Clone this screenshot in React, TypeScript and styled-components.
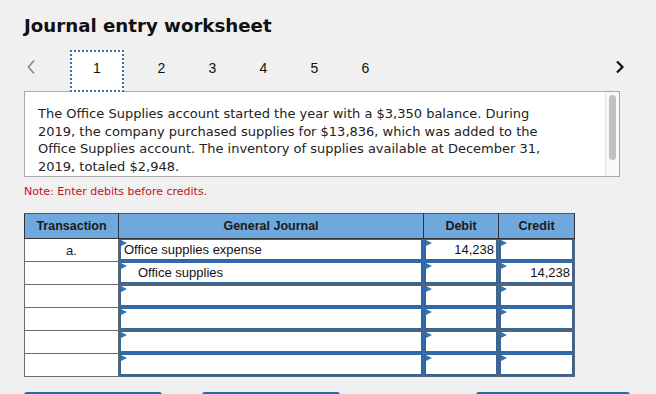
import styled, { createGlobalStyle } from 'styled-components';

const GlobalStyle = createGlobalStyle`
    html, body {
        margin: 0;
        padding: 0;
        overflow: hidden;
        background: #f0f0f0;
    }
`

const Page = styled.div`
    padding: 15px 26px 0 24px;
    font-family: 'DejaVu Sans', Verdana, sans-serif;
    color: #222;
`

const Title = styled.h1`
    margin: 0;
    font-size: 18.2px;
    font-weight: bold;
    line-height: 21px;
    color: #111;
`

const Nav = styled.div`
    display: flex;
    align-items: flex-start;
    height: 41px;
    margin-top: 14px;
    font-family: 'Liberation Sans', Arial, sans-serif;
`

const Arrow = styled.div<{ $dark?: boolean }>`
    display: flex;
    align-items: center;
    height: 34px;
    width: 46px;
    svg {
        display: block;
    }
    ${p => p.$dark && 'width: auto; margin-left: auto; padding-right: 4px;'}
`

const Tab = styled.div<{ $active?: boolean }>`
    box-sizing: border-box;
    width: ${p => (p.$active ? '54px' : '51px')};
    height: 42px;
    padding-top: 10px;
    text-align: center;
    font-size: 14px;
    line-height: 16px;
    color: #111;
    ${p => p.$active && `
        background: #fff;
        border: 2px dotted #3a6fb0;
        margin-right: 12px;
        padding-top: 8px;
    `}
`

const Question = styled.div`
    display: flex;
    box-sizing: border-box;
    width: 596px;
    height: 86px;
    background: #fff;
    border: 1px solid #a9a9a9;
    overflow: hidden;
`

const QuestionText = styled.p`
    flex: 1;
    margin: 0;
    padding: 13px 44px 0 13px;
    font-size: 13px;
    line-height: 17.7px;
    color: #222;
`

const ScrollTrack = styled.div`
    width: 14px;
    flex: none;
    background: #f8f8f8;
    border-left: 1px solid #e4e4e4;
    padding: 3px 3px 0 3px;
    box-sizing: border-box;
`

const ScrollThumb = styled.div`
    height: 65px;
    border-radius: 4px;
    background: #c1c1c1;
`

const Note = styled.div`
    margin-top: 8px;
    font-size: 11px;
    line-height: 13px;
    color: #c0101e;
`

const Journal = styled.table`
    margin-top: 15px;
    width: 550px;
    border-collapse: collapse;
    table-layout: fixed;
    font-family: 'Liberation Sans', Arial, sans-serif;
    font-size: 13px;
    background: #fff;
`

const Head = styled.th<{ $w: number }>`
    width: ${p => p.$w}px;
    height: 24px;
    padding: 0;
    background: #6fa8dc;
    border: 1px solid #333;
    border-top-color: #555;
    font-size: 12.5px;
    font-weight: bold;
    color: #1a1a1a;
    text-align: center;
`

const Plain = styled.td`
    height: 22px;
    padding: 0;
    border: 1px solid #6a6a6a;
    text-align: center;
    color: #222;
`

const InputCell = styled.td`
    height: 22px;
    padding: 0;
    border: 1px solid #5c6670;
`

const Field = styled.div<{ $right?: boolean; $indent?: boolean }>`
    position: relative;
    box-sizing: border-box;
    height: 22px;
    border: 2px solid #2f67a6;
    border-top-width: 1px;
    padding: 0 ${p => (p.$right ? '2px' : '3px')} 0 ${p => (p.$indent ? '17px' : '3px')};
    line-height: 20px;
    text-align: ${p => (p.$right ? 'right' : 'left')};
    color: #111;
    white-space: nowrap;
    overflow: hidden;
`

const Marker = styled.span`
    position: absolute;
    left: 0;
    top: 0;
    width: 0;
    height: 0;
    border-top: 3.5px solid transparent;
    border-bottom: 3.5px solid transparent;
    border-left: 6px solid #3572ba;
`

const Buttons = styled.div`
    display: flex;
    margin-top: 15px;
`

const Button = styled.div<{ $w: number; $gap: number }>`
    width: ${p => p.$w}px;
    margin-left: ${p => p.$gap}px;
    height: 30px;
    background: #2f6aa8;
    border-radius: 3px 3px 0 0;
`

const rows = [
    { tx: 'a.', account: 'Office supplies expense', debit: '14,238', credit: '' },
    { tx: '', account: 'Office supplies', debit: '', credit: '14,238', indent: true },
    { tx: '', account: '', debit: '', credit: '' },
    { tx: '', account: '', debit: '', credit: '' },
    { tx: '', account: '', debit: '', credit: '' },
    { tx: '', account: '', debit: '', credit: '' },
]

function App() {
    return (
        <Page>
            <GlobalStyle />
            <Title>Journal entry worksheet</Title>
            <Nav>
                <Arrow>
                    <svg width="14" height="16" viewBox="0 0 14 16">
                        <path d="M10 1.5 L4.5 8 L10 14.5" fill="none" stroke="#8a8a8a" strokeWidth="1.6" />
                    </svg>
                </Arrow>
                <Tab $active>1</Tab>
                {[2, 3, 4, 5, 6].map(n => (
                    <Tab key={n}>{n}</Tab>
                ))}
                <Arrow $dark>
                    <svg width="12" height="16" viewBox="0 0 12 16">
                        <path d="M3 2.5 L8.5 8 L3 13.5" fill="none" stroke="#111" strokeWidth="2.2" />
                    </svg>
                </Arrow>
            </Nav>
            <Question>
                <QuestionText>
                    The Office Supplies account started the year with a $3,350 balance. During 2019, the company
                    purchased supplies for $13,836, which was added to the Office Supplies account. The inventory of
                    supplies available at December 31, 2019, totaled $2,948.
                </QuestionText>
                <ScrollTrack>
                    <ScrollThumb />
                </ScrollTrack>
            </Question>
            <Note>Note: Enter debits before credits.</Note>
            <Journal>
                <thead>
                    <tr>
                        <Head $w={93}>Transaction</Head>
                        <Head $w={304}>General Journal</Head>
                        <Head $w={74}>Debit</Head>
                        <Head $w={75}>Credit</Head>
                    </tr>
                </thead>
                <tbody>
                    {rows.map((r, i) => (
                        <tr key={i}>
                            <Plain>{r.tx}</Plain>
                            <InputCell>
                                <Field $indent={r.indent}>
                                    <Marker />
                                    {r.account}
                                </Field>
                            </InputCell>
                            <InputCell>
                                <Field $right>
                                    <Marker />
                                    {r.debit}
                                </Field>
                            </InputCell>
                            <InputCell>
                                <Field $right>
                                    <Marker />
                                    {r.credit}
                                </Field>
                            </InputCell>
                        </tr>
                    ))}
                </tbody>
            </Journal>
            <Buttons>
                <Button $w={138} $gap={0} />
                <Button $w={138} $gap={40} />
                <Button $w={154} $gap={136} />
            </Buttons>
        </Page>
    )
}

export default App
